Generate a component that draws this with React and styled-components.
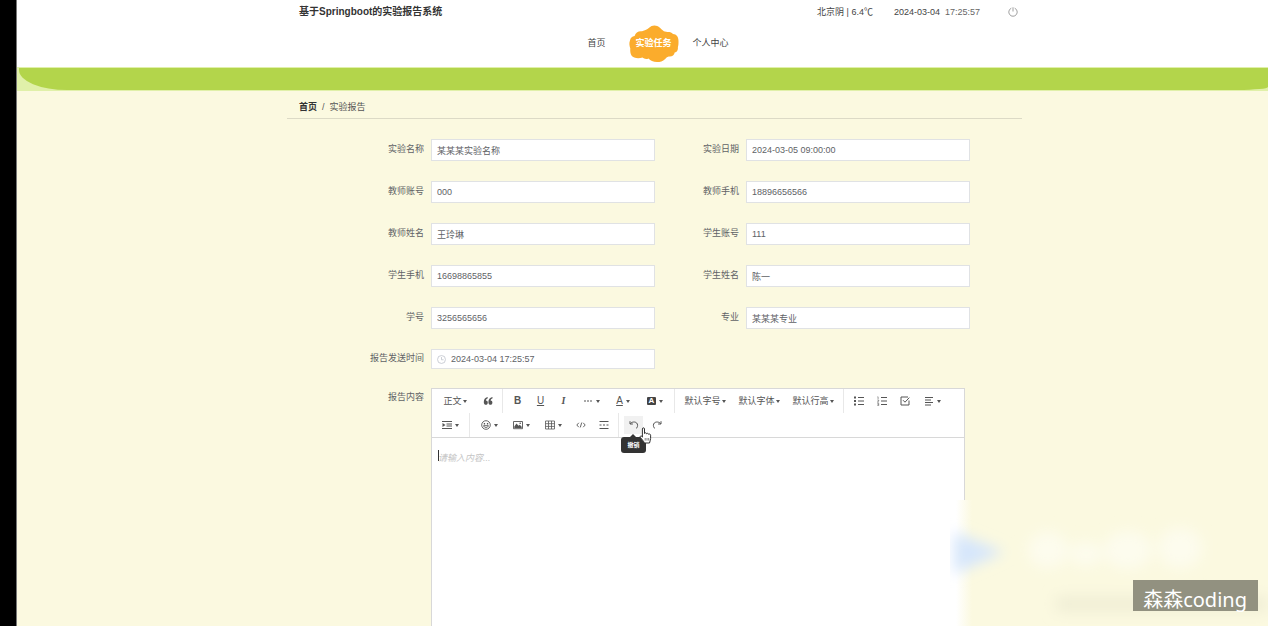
import React from "react";
import styled, { createGlobalStyle, css } from "styled-components";

const GlobalStyle = createGlobalStyle`
  * { box-sizing: border-box; }
  body {
    margin: 0;
    background: #fbf9e0;
    color: #606266;
    font: 9px/20px "Liberation Sans", "Noto Sans CJK SC", sans-serif;
  }
  button, input, textarea { font: inherit; color: inherit; }
`;

const Page = styled.div`
  position: relative;
  display: flex;
  height: 100vh;
  min-height: 500px;
  overflow: hidden;
`;

const Edge = styled.div`
  flex: none;
  width: 17px;
  background: #000;
  border-right: 1px solid #777;
`;

const Main = styled.main`
  flex: 1;
  min-width: 0;
  display: flex;
  flex-direction: column;
`;

const Header = styled.header`
  flex: none;
  height: 67px;
  padding-left: 24px;
  background: #fff;
`;

const Container = styled.div`
  width: 735px;
  max-width: 100%;
  margin: 0 auto;
`;

const TopBar = styled.div`
  display: flex;
  align-items: center;
  height: 24px;
  padding: 0 4px 0 12px;
  color: #444;
`;

const Title = styled.h1`
  margin: 0 auto 0 0;
  font-size: 10px;
  font-weight: 700;
  color: #333;
`;

const Weather = styled.span`
  margin-right: 21px;
`;

const Clock = styled.time`
  display: flex;
  gap: 5px;
  margin-right: 28px;
`;

const Muted = styled.span`
  color: #666;
`;

const PlainButton = styled.button`
  display: flex;
  padding: 0;
  border: 0;
  background: none;
  color: #888;
`;

const Nav = styled.nav`
  display: flex;
  justify-content: center;
  padding-right: 2px;
`;

const NavLink = styled.a`
  display: grid;
  place-items: center;
  width: 57px;
  height: 38px;
  color: ${(p) => (p.$active ? "#fff" : "#444")};
  font-weight: ${(p) => (p.$active ? 700 : 400)};
  text-decoration: none;
  > * { grid-area: 1 / 1; }
`;

const Band = styled.div`
  flex: none;
  height: 24px;
  padding: 1px 0 1px 2px;
  background: #e0f0a9;
`;

const BandFill = styled.div`
  height: 100%;
  background: #b3d54b;
  border-radius: 0 0 30px 48px / 0 0 3px 20px;
`;

const Content = styled.div`
  flex: 1;
  min-height: 0;
  display: flex;
  flex-direction: column;
  padding-left: 24px;
`;

const Body = styled(Container)`
  flex: 1;
  display: flex;
  flex-direction: column;
`;

const Breadcrumb = styled.nav`
  display: flex;
  gap: 5px;
  height: 28px;
  padding: 6px 12px 0;
  border-bottom: 1px solid #dcdac6;
  color: #555;
  a { color: #333; font-weight: 700; text-decoration: none; }
`;

const Form = styled.form`
  flex: 1;
  display: flex;
  flex-direction: column;
  padding: 20px 52px 0;
`;

const Fields = styled.div`
  display: grid;
  grid-template-columns: 92px 1fr 91px 1fr;
  row-gap: 20px;
`;

const Label = styled.label`
  height: 20px;
  padding-right: 7px;
  line-height: ${(p) => (p.$short ? 18 : 20)}px;
  text-align: right;
  white-space: nowrap;
`;

const InputBox = styled.div`
  display: flex;
  align-items: center;
  gap: 5px;
  height: ${(p) => (p.$short ? 20 : 22)}px;
  padding: 0 5px;
  background: #fff;
  border: 1px solid #e0e2e4;
  color: #c0c4cc;
`;

const Input = styled.input`
  flex: 1;
  min-width: 0;
  height: 100%;
  padding: 0;
  border: 0;
  outline: 0;
  background: none;
  color: #606266;
`;

const EditorRow = styled.div`
  flex: 1;
  display: grid;
  grid-template-columns: 92px 1fr;
  margin: 19px 5px 0 0;
`;

const Editor = styled.div`
  display: flex;
  flex-direction: column;
  background: #fff;
  border: 1px solid #d8d8d8;
  border-bottom: 0;
`;

const Toolbar = styled.div`
  display: flex;
  flex-wrap: wrap;
  padding: 0 2px;
  border-bottom: 1px solid #d8d8d8;
`;

const widths = { icon: 23, menu: 32, style: 42, text: 54 };

const ToolSlot = styled.div`
  position: relative;
  width: ${(p) => widths[p.$size]}px;
  height: 24px;
  padding: 3px 2px;
`;

const ToolButton = styled.button`
  display: flex;
  align-items: center;
  justify-content: center;
  gap: ${(p) => (p.$tight ? 1 : 3)}px;
  width: 100%;
  height: 100%;
  padding: 0;
  border: 0;
  background: ${(p) => (p.$hover ? "#f1f1f1" : "none")};
  color: #555;
  line-height: 18px;
  white-space: nowrap;
`;

const Divider = styled.span`
  width: 1px;
  height: 24px;
  margin: 0 3px;
  background: #e8e8e8;
`;

const Caret = styled.i`
  flex: none;
  border: 2px solid transparent;
  border-top: 3px solid #555;
  border-bottom: 0;
`;

const Letter = styled.span`
  font-size: 10px;
  ${(p) => p.$kind === "bold" && css`font-weight: 700;`}
  ${(p) => p.$kind === "underline" && css`text-decoration: underline;`}
  ${(p) => p.$kind === "italic" && css`font-family: "Liberation Serif", serif; font-style: italic; font-weight: 700;`}
  ${(p) => p.$kind === "fill" && css`
    width: 9px;
    height: 8px;
    background: #444;
    color: #fff;
    font-size: 8px;
    font-weight: 700;
    line-height: 8px;
    border-radius: 1px;
  `}
`;

const Tooltip = styled.span`
  position: absolute;
  top: 24px;
  left: -1px;
  z-index: 2;
  width: 25px;
  height: 16px;
  border-radius: 3px;
  background: #333;
  color: #fff;
  font-size: 6px;
  font-weight: 700;
  line-height: 16px;
  text-align: center;
  &::before {
    content: "";
    position: absolute;
    left: 9px;
    bottom: 100%;
    border: 3px solid transparent;
    border-top: 0;
    border-bottom-color: #333;
  }
`;

const Pointer = styled.svg`
  position: absolute;
  top: 14px;
  left: 17px;
  z-index: 3;
`;

const TextWrap = styled.div`
  position: relative;
  flex: 1;
  display: flex;
`;

const TextCursor = styled.span`
  position: absolute;
  top: 12px;
  left: 6px;
  width: 1px;
  height: 11px;
  background: #333;
`;

const TextArea = styled.textarea`
  flex: 1;
  padding: 10px 6px;
  border: 0;
  outline: 0;
  resize: none;
  background: none;
  &::placeholder { color: #c4c4c4; font-style: italic; opacity: 1; }
`;

const Haze = styled.div`
  position: absolute;
  right: 0;
  bottom: 0;
  width: 318px;
  height: 126px;
  overflow: hidden;
  pointer-events: none;
  background: linear-gradient(90deg, #fff 0 6px, #fbf9e0 22px);
`;

const Badge = styled.div`
  position: absolute;
  right: 10px;
  bottom: 15px;
  height: 31px;
  padding: 0 11px 0 10px;
  background: #929180;
  color: #fff;
  font: 20px/39px "Noto Sans", "Noto Sans CJK SC", sans-serif;
`;

/* Shared frame for the small line icons of the toolbar */
const Icon = ({ children, size = 10, w = 1 }) => (
  <svg width={size} height={size} viewBox="0 0 10 10" fill="none" stroke="currentColor" strokeWidth={w} aria-hidden="true">
    {children}
  </svg>
);

const icons = {
  quote: (
    <Icon w={0}>
      <path fill="currentColor" d="M4.600 1C2 1.500.8 3.500.8 6.200c0 1.500.8 2.600 2 2.600 1.200 0 2-.9 2-2.100S4 4.600 2.900 4.600c0-1 .6-1.900 1.900-2.400zM9.400 1C6.800 1.500 5.400 3.500 5.400 6.200c0 1.500.8 2.600 2 2.600 1.200 0 2-.9 2-2.100s-.7-2.100-1.800-2.100c0-1 .6-1.900 2-2.400z" />
    </Icon>
  ),
  dots: (
    <Icon w={0}>
      <path fill="currentColor" d="M1 4.400h2v1.200H1zM4 4.400h2v1.200H4zM7 4.400h2v1.200H7z" />
    </Icon>
  ),
  ul: (
    <Icon>
      <path d="M4 1.500h6M4 5h6M4 8.500h6" />
      <path fill="currentColor" stroke="none" d="M0 .5h2v2H0zM0 4h2v2H0zM0 7.500h2v2H0z" />
    </Icon>
  ),
  ol: (
    <Icon>
      <path d="M4 1.500h6M4 5h6M4 8.500h6" />
      <path strokeWidth=".6" d="M.5.800h.6V3M.3 4h1.400v1L.4 6h1.400M.3 7.300h1.400v2.300H.3M.5 8.400h1.200" />
    </Icon>
  ),
  todo: (
    <Icon>
      <path d="M9 4.500V9H1V1h7" />
      <path d="M3 4.200l2 2L9.300 1.600" />
    </Icon>
  ),
  align: (
    <Icon>
      <path d="M1 1.500h8M1 4h6M1 6.500h8M1 9h6" />
    </Icon>
  ),
  indent: (
    <Icon>
      <path d="M0 1.500h10M4.500 4h5.500M4.500 6h5.500M0 8.500h10" />
      <path fill="currentColor" stroke="none" d="M.5 3l3 2-3 2z" />
    </Icon>
  ),
  smile: (
    <Icon w={0.9}>
      <circle cx="5" cy="5" r="4.300" />
      <path d="M2.600 5.700c.5 2.400 4.300 2.400 4.800 0z" />
      <path fill="currentColor" stroke="none" d="M2.800 3h1.300v1.400H2.800zM5.900 3h1.300v1.400H5.900z" />
    </Icon>
  ),
  image: (
    <Icon w={0.9}>
      <path d="M.5 1.500h9v7.200h-9z" />
      <path fill="currentColor" stroke="none" d="M1.300 7.900V6.500l2.200-3 2 2.300 1.300-1 1.900 2v1.100z" />
      <circle cx="7.200" cy="3.300" r=".8" fill="currentColor" stroke="none" />
    </Icon>
  ),
  table: (
    <Icon w={0.8}>
      <path d="M.5 1h9v8h-9zM.5 3.700h9M.5 6.400h9M3.500 1v8M6.500 1v8" />
    </Icon>
  ),
  code: (
    <Icon w={0.9}>
      <path d="M2.800 2.800L.8 5l2 2.200M7.200 2.800l2 2.200-2 2.200M5.700 2.600L4.300 7.400" />
    </Icon>
  ),
  rule: (
    <Icon>
      <path d="M.5 1.500h9M.5 8.500h9M.5 5h2M4 5h2M7.500 5h2" />
    </Icon>
  ),
  undo: (
    <Icon>
      <path d="M1 1.200V4h2.900M1.200 3.800C3.300 1 8.500 1.400 8.600 5.300c0 1.500-.6 2.500-1.600 3.300" />
    </Icon>
  ),
  redo: (
    <Icon>
      <path d="M9 1.200V4H6.100M8.800 3.800C6.700 1 1.500 1.400 1.400 5.300c0 1.500.6 2.500 1.600 3.300" />
    </Icon>
  ),
};

const tools = [
  { name: "正文", text: "正文", size: "style", menu: true },
  { name: "引用", icon: "quote" },
  null,
  { name: "粗体", letter: "B", kind: "bold" },
  { name: "下划线", letter: "U", kind: "underline" },
  { name: "斜体", letter: "I", kind: "italic" },
  { name: "更多", icon: "dots", menu: true },
  { name: "文字颜色", letter: "A", kind: "underline", menu: true },
  { name: "背景色", letter: "A", kind: "fill", menu: true },
  null,
  { name: "默认字号", text: "默认字号", size: "text", menu: true },
  { name: "默认字体", text: "默认字体", size: "text", menu: true },
  { name: "默认行高", text: "默认行高", size: "text", menu: true },
  null,
  { name: "无序列表", icon: "ul" },
  { name: "有序列表", icon: "ol" },
  { name: "待办", icon: "todo" },
  { name: "对齐", icon: "align", menu: true },
  { name: "缩进", icon: "indent", menu: true },
  null,
  { name: "表情", icon: "smile", menu: true },
  { name: "图片", icon: "image", menu: true },
  { name: "表格", icon: "table", menu: true },
  { name: "代码", icon: "code" },
  { name: "分割线", icon: "rule" },
  null,
  { name: "撤销", icon: "undo", hover: true },
  { name: "重做", icon: "redo" },
];

const fields = [
  ["实验名称", "某某某实验名称"],
  ["实验日期", "2024-03-05 09:00:00"],
  ["教师账号", "000"],
  ["教师手机", "18896656566"],
  ["教师姓名", "王玲琳"],
  ["学生账号", "111"],
  ["学生手机", "16698865855"],
  ["学生姓名", "陈一"],
  ["学号", "3256565656"],
  ["专业", "某某某专业"],
  ["报告发送时间", "2024-03-04 17:25:57", true],
];

function Tool({ name, text, icon, letter, kind, size, menu, hover }) {
  return (
    <ToolSlot $size={size || (menu ? "menu" : "icon")}>
      <ToolButton type="button" aria-label={name} $hover={hover} $tight={Boolean(text)}>
        {text}
        {icon && icons[icon]}
        {letter && <Letter $kind={kind}>{letter}</Letter>}
        {menu && <Caret />}
      </ToolButton>
      {hover && (
        <>
          <Tooltip role="tooltip">{name}</Tooltip>
          <Pointer width="13" height="17" viewBox="0 0 13 17" fill="#fff" stroke="#333" strokeWidth="1">
            <path d="M3.400 10.200V2c0-1.600 2.100-1.600 2.100 0v4.500c.3-1 2-.9 2.100.3.500-.8 1.900-.5 2 .5.700-.6 2-.2 2 .9v3.300c0 1.800-.8 2.700-1.100 4.500H5.300c-.3-1.700-2.500-3.600-3.900-5.600-.8-1.200.7-2.100 1.500-1.100z" />
            <path d="M6.200 11v2.600M8 11v2.600M9.700 11v2.600" strokeWidth=".6" />
          </Pointer>
        </>
      )}
    </ToolSlot>
  );
}

export default function App() {
  return (
    <Page>
      <GlobalStyle />
      <Edge />
      <Main>
        <Header>
          <Container>
            <TopBar>
              <Title>基于Springboot的实验报告系统</Title>
              <Weather>北京阴 | 6.4℃</Weather>
              <Clock>
                <span>2024-03-04</span>
                <Muted>17:25:57</Muted>
              </Clock>
              <PlainButton type="button" aria-label="退出">
                <Icon w={0.8}>
                  <path d="M3.300 1.200a4.200 4.200 0 1 0 3.400 0M5 .3v4.200" />
                </Icon>
              </PlainButton>
            </TopBar>
            <Nav>
              <NavLink href="#home">首页</NavLink>
              <NavLink href="#tasks" $active>
                <svg width="50" height="37" viewBox="0 0 50 37" fill="#fbac2c" aria-hidden="true">
                  <path d="M16.500 5C19.500 4.500 21 .6 25.500.6c4 0 6 3 8.500 5 1 1 2.500 1.300 4.500 1.300 3 0 4.500.6 5.500 2.100 3.500 0 5.500 3 5.500 7 0 3 0 4-.6 6 .4 3-.9 5.200-3.200 5.500-.5 3-3 4.500-6 4-2 .3-2.500 1.500-3.500 2.500-2.500 2.500-5 3-8.200 3-4 0-6.500-1.600-8.500-3.600-2 1-4.500.6-6-.9-4 1.500-9 .8-11-2C1.400 28.500 1 26 1.300 23.500.3 20 0 18 1 15.500 1.300 13 3 11.500 5.600 11 6.500 7.500 9.500 5.800 13 6.300z" />
                </svg>
                <span>实验任务</span>
              </NavLink>
              <NavLink href="#me">个人中心</NavLink>
            </Nav>
          </Container>
        </Header>
        <Band><BandFill /></Band>
        <Content>
          <Body>
            <Breadcrumb>
              <a href="#home">首页</a>
              <span>/</span>
              <span>实验报告</span>
            </Breadcrumb>
            <Form>
              <Fields>
                {fields.map(([label, value, clock], i) => (
                  <React.Fragment key={label}>
                    <Label htmlFor={`field-${i}`} $short={clock}>{label}</Label>
                    <InputBox $short={clock}>
                      {clock && (
                        <Icon size={9} w={0.9}>
                          <circle cx="5" cy="5" r="4.400" />
                          <path d="M5 2.300V5.300H7.300" />
                        </Icon>
                      )}
                      <Input id={`field-${i}`} readOnly value={value} />
                    </InputBox>
                  </React.Fragment>
                ))}
              </Fields>
              <EditorRow>
                <Label htmlFor="report" $short>报告内容</Label>
                <Editor>
                  <Toolbar>
                    {tools.map((t, i) => (t ? <Tool key={i} {...t} /> : <Divider key={i} />))}
                  </Toolbar>
                  <TextWrap>
                    <TextCursor />
                    <TextArea id="report" placeholder="请输入内容..." />
                  </TextWrap>
                </Editor>
              </EditorRow>
            </Form>
          </Body>
        </Content>
      </Main>
      <Haze>
        <svg width="318" height="126" viewBox="0 0 318 126" aria-hidden="true">
          <defs>
            <filter id="soft" x="-50%" y="-50%" width="200%" height="200%">
              <feGaussianBlur stdDeviation="7" />
            </filter>
          </defs>
          <g filter="url(#soft)">
            <path fill="#d6e6fc" d="M4 32L54 52 4 74z" />
            <g fill="#fdfcee">
              <ellipse cx="98" cy="50" rx="20" ry="18" />
              <ellipse cx="136" cy="54" rx="16" ry="12" />
              <ellipse cx="178" cy="50" rx="24" ry="19" />
              <ellipse cx="230" cy="48" rx="22" ry="20" />
            </g>
            <path fill="#f0eed6" d="M106 96h212v16H106z" />
          </g>
        </svg>
      </Haze>
      <Badge>森森coding</Badge>
    </Page>
  );
}
